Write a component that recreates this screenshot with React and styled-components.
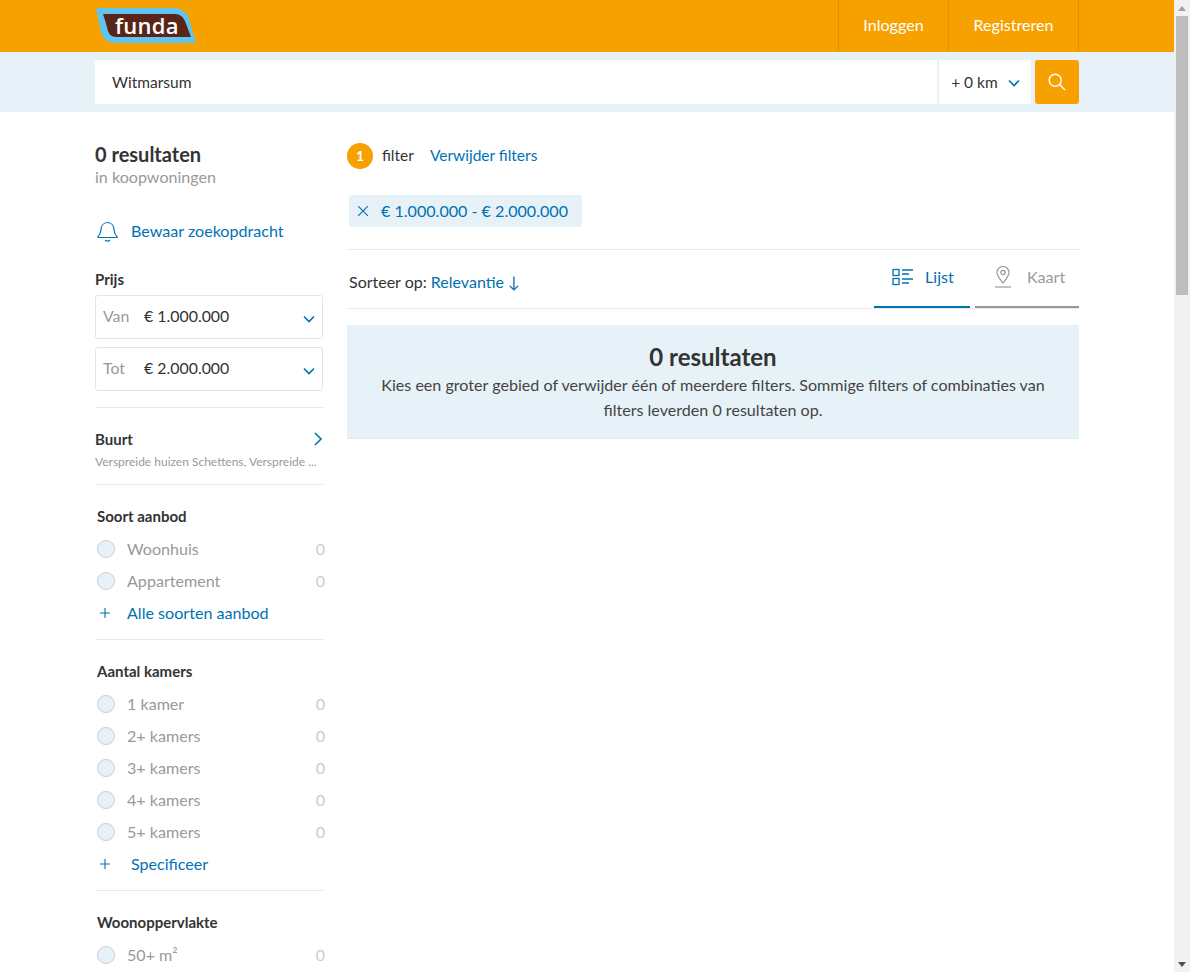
import React from "react";
import styled, { createGlobalStyle } from "styled-components";

const FONT = `"Lato", "Open Sans", Arial, sans-serif`;
const BLUE = "#0071b3";
const SIZE = "16.1px";
const SMALL = "15.5px";

const Global = createGlobalStyle`
  html, body { margin: 0; padding: 0; height: 972px; overflow: hidden; background: #fff; }
  body { font-family: ${FONT}; font-size: 16px; color: #333; }
  * { box-sizing: border-box; }
`;

const Page = styled.div`
  width: 1174px;
  height: 972px;
  overflow: hidden;
`;
const TopBar = styled.header`
  height: 52px;
  background: #f7a100;
  padding: 0 95px;
  display: flex;
  justify-content: space-between;
`;
const Logo = styled.div`
  position: relative;
  width: 102px;
  height: 37px;
  margin-top: 7px;
`;
const LogoText = styled.span`
  position: absolute;
  left: 20px;
  top: 3px;
  color: #fff;
  font: 600 22px/30px "Open Sans", sans-serif;
  letter-spacing: 0.3px;
`;
const Nav = styled.nav`
  display: flex;
  border-right: 1px solid #df9100;
`;
const NavItem = styled.a`
  width: ${p => p.$w}px;
  border-left: 1px solid #df9100;
  color: #fff;
  font-size: ${SIZE};
  line-height: 50px;
  text-align: center;
`;
const SearchBand = styled.div`
  height: 60px;
  background: #e6f2f7;
  padding: 8px 95px;
  display: flex;
`;
const SearchInput = styled.div`
  width: 843px;
  height: 44px;
  background: #fff;
  border-radius: 3px 0 0 3px;
  padding-left: 17px;
  line-height: 44px;
  font-size: ${SMALL};
  color: #333;
`;
const Radius = styled.div`
  width: 92px;
  height: 44px;
  margin-left: 2px;
  background: #fff;
  border-radius: 0 3px 3px 0;
  display: flex;
  align-items: center;
  padding-left: 12px;
  font-size: ${SMALL};
  gap: 10px;
`;
const ChevronSlot = styled.span`
  display: flex;
  padding-top: ${p => p.$top || 0}px;
`;
const SearchButton = styled.button`
  width: 44px;
  height: 44px;
  margin-left: 4px;
  padding: 0;
  border: 0;
  border-radius: 3px;
  background: #f7a100;
  display: flex;
  align-items: center;
  justify-content: center;
`;
const Content = styled.div`
  padding: 0 95px;
  display: grid;
  grid-template-columns: 228px 732px;
  column-gap: 24px;
`;
const Sidebar = styled.aside`
  min-width: 0;
  padding-top: 30px;
`;
const ResultTitle = styled.div`
  font-size: 20px;
  font-weight: 700;
  line-height: 24px;
  color: #333;
`;
const ResultSub = styled.div`
  margin-top: 1px;
  font-size: ${SIZE};
  line-height: 20px;
  color: #999;
`;
const Raised = styled.span`
  padding-bottom: 2px;
`;
const SaveRow = styled.a`
  display: flex;
  align-items: center;
  gap: 13px;
  margin-top: 32px;
  height: 24px;
  padding-left: 2px;
  color: ${BLUE};
  font-size: ${SIZE};
`;
const Label = styled.div`
  font-size: 15px;
  font-weight: 700;
  line-height: 20px;
  color: #333;
  margin-top: ${p => p.$top || 0}px;
  padding-left: ${p => p.$pad || 0}px;
`;
const SelectBox = styled.div`
  height: 44px;
  margin-top: ${p => p.$top}px;
  border: 1px solid #e4e4e4;
  border-radius: 3px;
  display: flex;
  align-items: center;
  padding: 0 7px;
  font-size: 15.9px;
`;
const SelectHint = styled.span`
  width: 41px;
  padding-bottom: 4px;
  color: #999;
`;
const SelectValue = styled.span`
  flex: 1;
  padding-bottom: 4px;
  color: #333;
`;
const Divider = styled.hr`
  border: 0;
  border-top: 1px solid #e8e8e8;
  margin: ${p => p.$top}px 0 0;
`;
const AreaHead = styled.div`
  display: flex;
  justify-content: space-between;
  align-items: center;
  margin-top: 21px;
  height: 20px;
`;
const AreaSub = styled.div`
  font-size: 12px;
  line-height: 14px;
  margin-top: 6px;
  color: #999;
  white-space: nowrap;
`;
const GroupList = styled.div`
  margin-top: 7px;
`;
const OptionRow = styled.div`
  display: grid;
  grid-template-columns: 30px 1fr auto;
  align-items: center;
  height: 32px;
  width: 230px;
  padding-left: 2px;
  font-size: ${SIZE};
  color: #999;
`;
const Radio = styled.span`
  width: 18px;
  height: 18px;
  border-radius: 50%;
  border: 1px solid #ccc;
  background: #e6f2f7;
`;
const Count = styled(Raised)`
  color: #ccc;
`;
const MoreRow = styled.a`
  display: grid;
  grid-template-columns: ${p => p.$col}px 1fr;
  align-items: center;
  height: 32px;
  padding-left: 5px;
  color: ${BLUE};
  font-size: ${SIZE};
`;
const Main = styled.main`
  min-width: 0;
  padding-top: 31px;
`;
const FilterRow = styled.div`
  display: flex;
  align-items: center;
  height: 26px;
  font-size: ${SMALL};
`;
const Badge = styled.span`
  width: 26px;
  height: 26px;
  border-radius: 50%;
  background: #f7a100;
  color: #fff;
  font-size: 14px;
  font-weight: 700;
  line-height: 26px;
  text-align: center;
`;
const FilterWord = styled(Raised)`
  margin-left: 9px;
  color: #333;
`;
const BlueLink = styled.a`
  color: ${BLUE};
  margin-left: ${p => p.$left || 0}px;
  padding-bottom: ${p => p.$bottom || 0}px;
`;
const Chip = styled.div`
  display: inline-flex;
  align-items: center;
  height: 32px;
  width: 233px;
  margin: 26px 0 0 2px;
  padding-left: 9px;
  gap: 13px;
  border-radius: 3px;
  background: #e6f2f7;
  color: ${BLUE};
  font-size: ${SIZE};
`;
const SortBar = styled.div`
  display: flex;
  justify-content: space-between;
  height: 60px;
  margin-top: 22px;
  border-top: 1px solid #e8e8e8;
  border-bottom: 1px solid #e8e8e8;
`;
const SortText = styled.div`
  padding: 22px 0 0 2px;
  font-size: 16px;
  line-height: 20px;
  color: #333;
`;
const Tabs = styled.div`
  display: flex;
  gap: 5px;
`;
const Tab = styled.div`
  width: ${p => p.$w}px;
  height: 58px;
  padding-left: ${p => p.$pad}px;
  gap: ${p => p.$gap}px;
  display: flex;
  align-items: center;
  padding-bottom: 3px;
  border-bottom: 2px solid ${p => (p.$active ? BLUE : "#999")};
  color: ${p => (p.$active ? BLUE : "#999")};
  font-size: ${SIZE};
`;
const Empty = styled.section`
  margin-top: 16px;
  height: 114px;
  background: #e6f2f7;
  border-bottom: 1px solid #e0e8ec;
  padding: 18px 30px 0;
  text-align: center;
`;
const EmptyTitle = styled.div`
  font-size: 24px;
  font-weight: 700;
  line-height: 27px;
  color: #333;
`;
const EmptyText = styled.p`
  margin: 2px 0 0;
  font-size: ${SIZE};
  line-height: 25px;
  color: #444;
`;
const ScrollTrack = styled.div`
  position: fixed;
  right: 0;
  top: 0;
  width: 16px;
  height: 972px;
  background: #f1f1f1;
`;
const ScrollThumb = styled.div`
  position: absolute;
  left: 2px;
  top: 16px;
  width: 12px;
  height: 279px;
  background: #bdbdbd;
`;
const ArrowUp = styled.div`
  position: absolute;
  left: 4px;
  top: 6px;
  border: 4px solid transparent;
  border-top: 0;
  border-bottom: 5px solid #a3a3a3;
`;
const ArrowDown = styled.div`
  position: absolute;
  left: 4px;
  bottom: 5px;
  border: 4px solid transparent;
  border-bottom: 0;
  border-top: 5px solid #505050;
`;

const Chevron = () => (
  <svg width="12" height="8" viewBox="0 0 12 8" fill="none" stroke={BLUE} strokeWidth="1.6">
    <path d="M1 1.5 6 6.5 11 1.5" />
  </svg>
);
const Plus = () => (
  <svg width="10" height="10" viewBox="0 0 10 10" stroke={BLUE} strokeWidth="1.1">
    <path d="M5 0v10M0 5h10" />
  </svg>
);
const Option = ({ label, count = 0 }) => (
  <OptionRow>
    <Radio />
    <Raised>{label}</Raised>
    <Count>{count}</Count>
  </OptionRow>
);

export default function App() {
  return (
    <Page>
      <Global />
      <TopBar>
        <Logo>
          <svg width="102" height="37" viewBox="0 0 102 37">
            <path d="M1 1 H78 C88 1 92 6 94 12 L101 36 H21 C11 36 7 31 5 21 Z" fill="#5fc4f0" />
            <path d="M8 7 H80 C85 7 88 10 90 14 L96 30 H22 C16 30 13 27 12 20 Z" fill="#5a2418" />
          </svg>
          <LogoText>funda</LogoText>
        </Logo>
        <Nav>
          <NavItem $w={110}>Inloggen</NavItem>
          <NavItem $w={130}>Registreren</NavItem>
        </Nav>
      </TopBar>
      <SearchBand>
        <SearchInput>Witmarsum</SearchInput>
        <Radius>
          <span>+ 0 km</span>
          <ChevronSlot $top={2}><Chevron /></ChevronSlot>
        </Radius>
        <SearchButton aria-label="Zoeken">
          <svg width="18" height="18" viewBox="0 0 18 18" fill="none" stroke="#fff" strokeWidth="1.4">
            <circle cx="7.2" cy="7.2" r="6" />
            <path d="M11.6 11.6 17 17" />
          </svg>
        </SearchButton>
      </SearchBand>
      <Content>
        <Sidebar>
          <ResultTitle>0 resultaten</ResultTitle>
          <ResultSub>in koopwoningen</ResultSub>
          <SaveRow>
            <svg width="21" height="22" viewBox="0 0 21 22" fill="none" stroke={BLUE} strokeWidth="1.2">
              <path d="M1 16.5c2-1.5 2.6-3 2.8-6 .2-4.500 2.700-8 6.700-8s6.500 3.500 6.700 8c.2 3 .8 4.500 2.800 6 .5.500.2 1-.5 1H1.500c-.7 0-1-.5-.5-1Z" />
              <path d="M8 20c1.500 1.300 3.500 1.300 5 0" />
            </svg>
            <Raised>Bewaar zoekopdracht</Raised>
          </SaveRow>
          <Label $top={26}>Prijs</Label>
          <SelectBox $top={6}>
            <SelectHint>Van</SelectHint>
            <SelectValue>€ 1.000.000</SelectValue>
            <ChevronSlot $top={3}><Chevron /></ChevronSlot>
          </SelectBox>
          <SelectBox $top={8}>
            <SelectHint>Tot</SelectHint>
            <SelectValue>€ 2.000.000</SelectValue>
            <ChevronSlot $top={3}><Chevron /></ChevronSlot>
          </SelectBox>
          <Divider $top={16} />
          <AreaHead>
            <Label>Buurt</Label>
            <svg width="10" height="14" viewBox="0 0 10 14" fill="none" stroke={BLUE} strokeWidth="1.6">
              <path d="M2 1l6 6-6 6" />
            </svg>
          </AreaHead>
          <AreaSub>Verspreide huizen Schettens, Verspreide ...</AreaSub>
          <Divider $top={15} />
          <Label $top={21} $pad={2}>Soort aanbod</Label>
          <GroupList>
            <Option label="Woonhuis" />
            <Option label="Appartement" />
            <MoreRow $col={27}><Plus /><Raised>Alle soorten aanbod</Raised></MoreRow>
          </GroupList>
          <Divider $top={10} />
          <Label $top={21} $pad={2}>Aantal kamers</Label>
          <GroupList>
            <Option label="1 kamer" />
            <Option label="2+ kamers" />
            <Option label="3+ kamers" />
            <Option label="4+ kamers" />
            <Option label="5+ kamers" />
            <MoreRow $col={31}><Plus /><Raised>Specificeer</Raised></MoreRow>
          </GroupList>
          <Divider $top={10} />
          <Label $top={21} $pad={2}>Woonoppervlakte</Label>
          <GroupList>
            <Option label="50+ m²" />
          </GroupList>
        </Sidebar>
        <Main>
          <FilterRow>
            <Badge>1</Badge>
            <FilterWord>filter</FilterWord>
            <BlueLink $left={16} $bottom={2}>Verwijder filters</BlueLink>
          </FilterRow>
          <Chip>
            <svg width="10" height="10" viewBox="0 0 10 10" stroke={BLUE} strokeWidth="1.1">
              <path d="M0 0l10 10M10 0 0 10" />
            </svg>
            <Raised>€ 1.000.000 - € 2.000.000</Raised>
          </Chip>
          <SortBar>
            <SortText>
              Sorteer op: <BlueLink>Relevantie ↓</BlueLink>
            </SortText>
            <Tabs>
              <Tab $w={96} $pad={18} $gap={12} $active>
                <svg width="21" height="18" viewBox="0 0 21 18" fill="none" stroke={BLUE} strokeWidth="1.3">
                  <rect x="1" y="1.500" width="6" height="6" />
                  <rect x="1" y="10.500" width="6" height="6" />
                  <path d="M10 2h11M10 6h7M10 11h11M10 15h7" />
                </svg>
                <span>Lijst</span>
              </Tab>
              <Tab $w={104} $pad={19} $gap={15} $active={false}>
                <svg width="18" height="22" viewBox="0 0 18 22" fill="none" stroke="#999" strokeWidth="1.2">
                  <path d="M9 17c-3-4-6-7-6-10.500a6 6 0 0 1 12 0C15 10 12 13 9 17Z" />
                  <circle cx="9" cy="6.500" r="2.200" />
                  <path d="M1 21h16" />
                </svg>
                <span>Kaart</span>
              </Tab>
            </Tabs>
          </SortBar>
          <Empty>
            <EmptyTitle>0 resultaten</EmptyTitle>
            <EmptyText>
              Kies een groter gebied of verwijder één of meerdere filters. Sommige filters of combinaties van filters leverden 0 resultaten op.
            </EmptyText>
          </Empty>
        </Main>
      </Content>
      <ScrollTrack>
        <ArrowUp />
        <ScrollThumb />
        <ArrowDown />
      </ScrollTrack>
    </Page>
  );
}
